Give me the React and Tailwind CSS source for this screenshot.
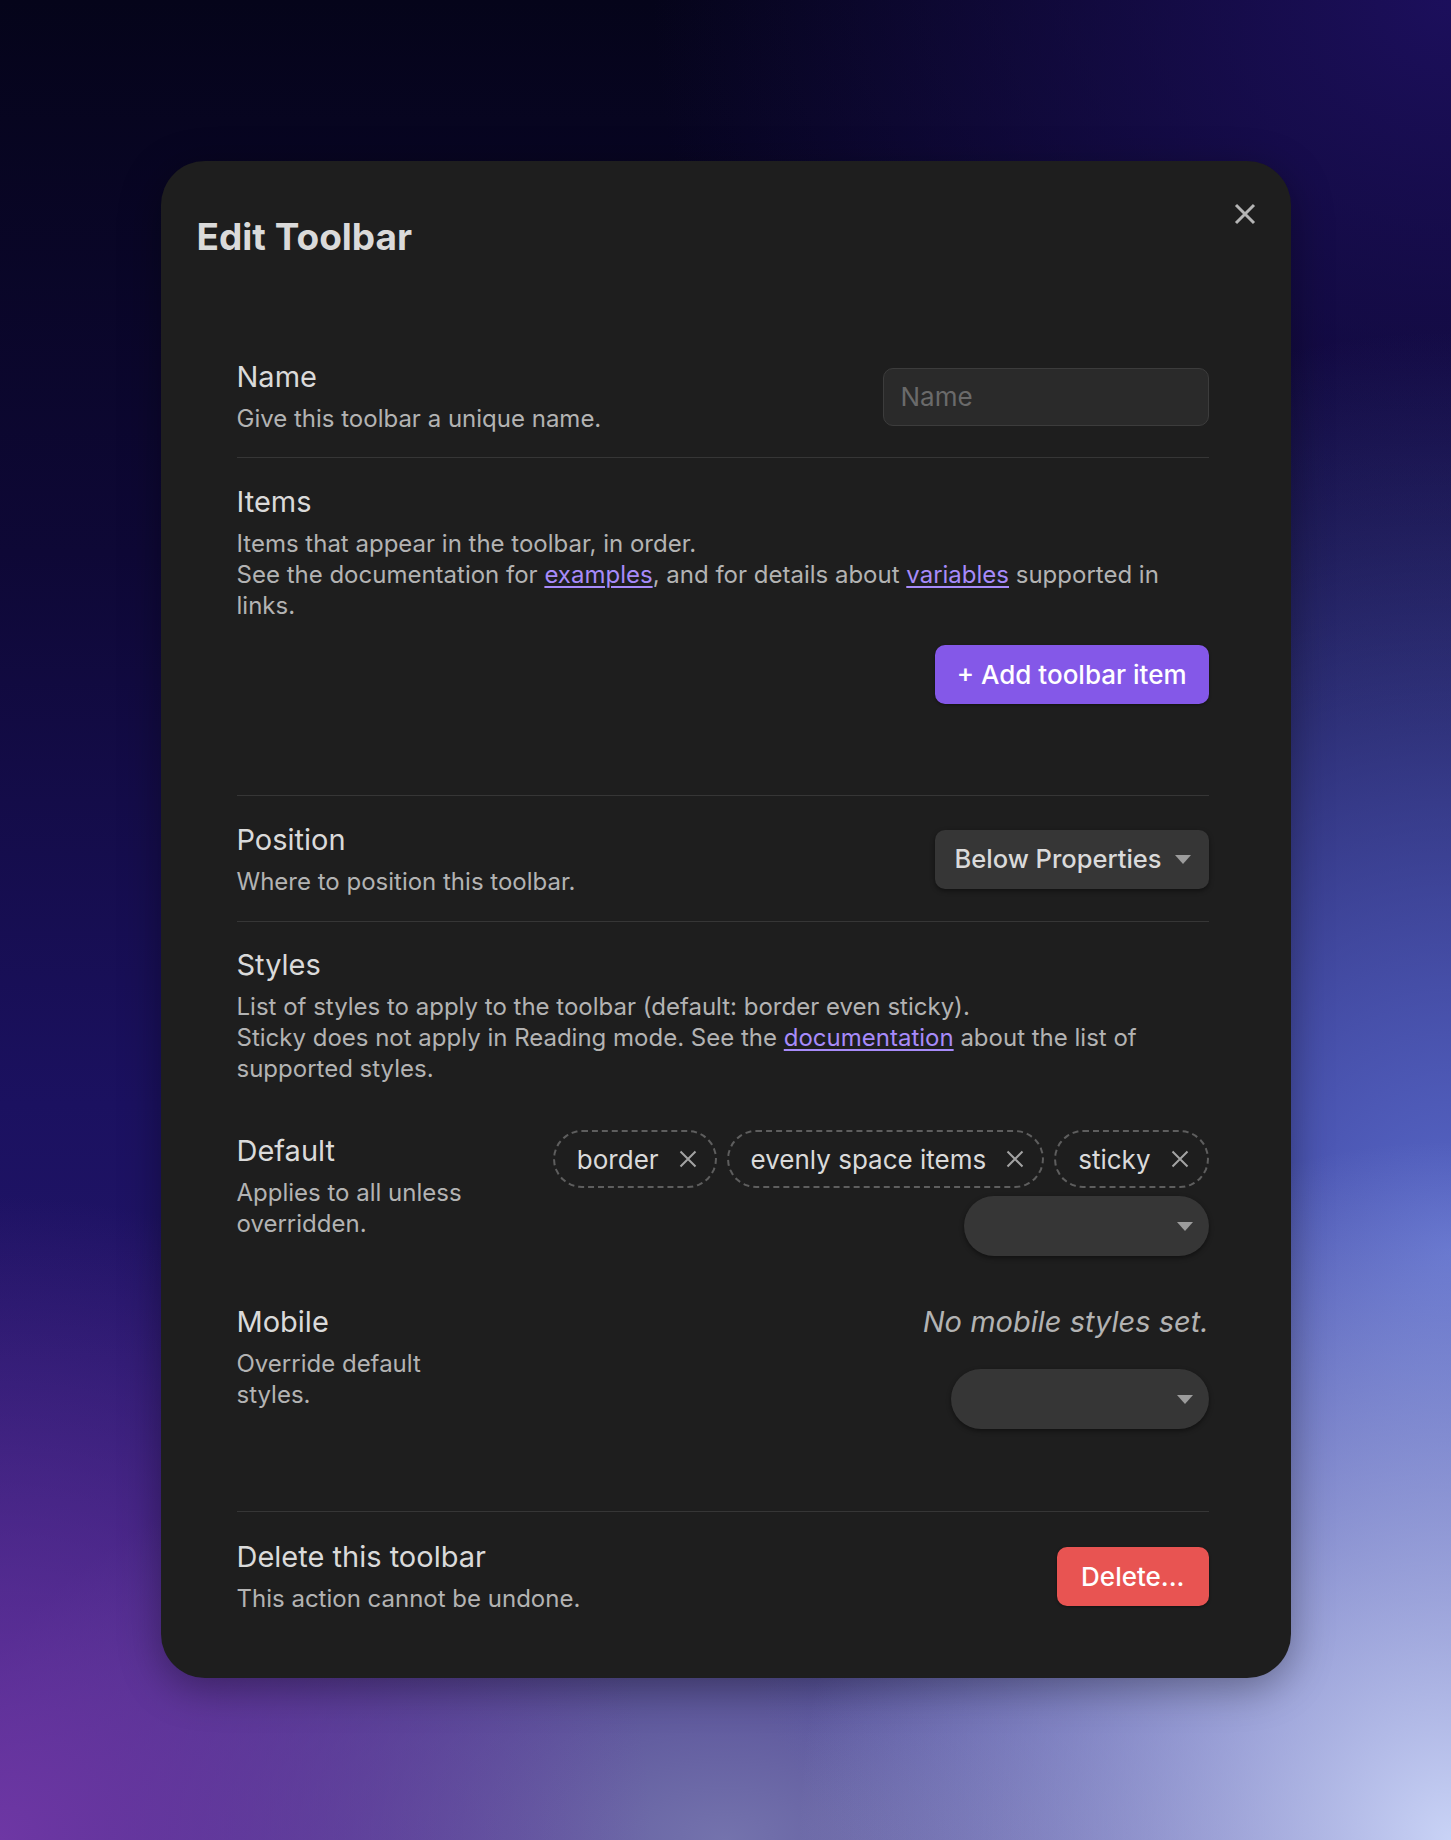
import React from "react";

function CloseIcon({ className }) {
  return (
    <svg viewBox="0 0 22 22" className={className} fill="none" stroke="currentColor" strokeWidth="3" strokeLinecap="butt">
      <path d="M2 2L20 20M20 2L2 20" />
    </svg>
  );
}

function ChipX() {
  return (
    <svg viewBox="0 0 18 18" className="w-[18px] h-[18px] text-[#a3a3a3]" fill="none" stroke="currentColor" strokeWidth="2">
      <path d="M1.5 1.5L16.5 16.5M16.5 1.5L1.5 16.5" />
    </svg>
  );
}

function Caret() {
  return (
    <svg viewBox="0 0 16 9" className="w-[16px] h-[9px] text-[#9c9c9c]" fill="currentColor">
      <path d="M0 0H16L8 9Z" />
    </svg>
  );
}

function Info({ name, children, className = "", descClass = "" }) {
  return (
    <div className={className}>
      <div className="text-[29px] leading-[36px] text-[#dadada]">{name}</div>
      <div className={`mt-[8px] text-[24px] leading-[31px] text-[#b3b3b3] ${descClass}`}>{children}</div>
    </div>
  );
}

function Link({ children }) {
  return <span className="text-[#a78bfa] underline underline-offset-[3px] decoration-[1.5px]">{children}</span>;
}

function Chip({ label }) {
  return (
    <div className="flex items-center h-[58px] pl-[22px] pr-[18px] gap-[20px] rounded-full border-2 border-dashed border-[#5e5e5e] text-[26px] text-[#dadada]">
      <span>{label}</span>
      <ChipX />
    </div>
  );
}

function PillSelect({ width }) {
  return (
    <div className={`${width} h-[60px] rounded-full bg-[#363636] shadow-[0_2px_5px_rgba(0,0,0,0.45)] flex items-center justify-end pr-[16px]`}>
      <Caret />
    </div>
  );
}

export default function App() {
  return (
    <div
      className="h-[1840px] w-full pt-[161px] bg-[radial-gradient(45%_38%_at_100%_100%,#c9d3f6_0%,rgba(170,185,235,0)_100%),radial-gradient(55%_50%_at_100%_68%,#5868c8_0%,rgba(80,95,190,0)_100%),radial-gradient(45%_35%_at_0%_100%,#6e37a4_0%,rgba(100,50,160,0)_100%),radial-gradient(55%_25%_at_50%_100%,#7473ad_0%,rgba(110,110,170,0)_100%),radial-gradient(55%_40%_at_100%_0%,#1c0f5c_0%,rgba(28,15,92,0)_100%),linear-gradient(180deg,#05041a_0%,#0e0836_30%,#1b1160_60%,#2f1c7a_100%)]"
      style={{ fontFamily: "Inter, 'Noto Sans', sans-serif" }}
    >
      <div className="relative mx-auto w-[1130px] rounded-[44px] bg-[#1e1e1e] pt-[54px] pb-[64px] px-[36px] shadow-[0_10px_40px_rgba(0,0,0,0.35)]">
        <button className="absolute top-[42px] right-[35px] text-[#b5b5b5]">
          <CloseIcon className="w-[22px] h-[22px]" />
        </button>
        <h1 className="text-[37px] leading-[44px] font-bold text-[#dadada] mb-[76px]">Edit Toolbar</h1>

        <div className="ml-[40px] mr-[46px]">
          {/* Name */}
          <div className="flex items-center justify-between pt-[24px] pb-[23px] border-b border-[#363636]">
            <Info name="Name">Give this toolbar a unique name.</Info>
            <div className="w-[326px] h-[58px] rounded-[10px] bg-[#2a2a2a] border-[1.5px] border-[#3c3c3c] flex items-center pl-[17px] text-[26px] text-[#6a6a6a]">
              Name
            </div>
          </div>

          {/* Items */}
          <div className="pt-[26px] pb-[91px] border-b border-[#363636]">
            <Info name="Items" descClass="max-w-[945px]">
              Items that appear in the toolbar, in order.
              <br />
              See the documentation for <Link>examples</Link>, and for details about <Link>variables</Link> supported in links.
            </Info>
            <div className="flex justify-end mt-[24px]">
              <button className="h-[59px] px-[22px] rounded-[10px] bg-[#8458e8] text-white text-[26px] font-medium shadow-[0_1px_3px_rgba(0,0,0,0.4)]">
                + Add toolbar item
              </button>
            </div>
          </div>

          {/* Position */}
          <div className="flex items-center justify-between pt-[26px] pb-[24px] border-b border-[#363636]">
            <Info name="Position">Where to position this toolbar.</Info>
            <div className="w-[274px] h-[59px] rounded-[10px] bg-[#363636] shadow-[0_2px_5px_rgba(0,0,0,0.45)] flex items-center justify-between pl-[20px] pr-[18px] text-[25.5px] font-medium text-[#dadada]">
              <span>Below Properties</span>
              <Caret />
            </div>
          </div>

          {/* Styles */}
          <div className="pt-[25px] pb-[82px] border-b border-[#363636]">
            <Info name="Styles">
              List of styles to apply to the toolbar (default: border even sticky).
              <br />
              Sticky does not apply in Reading mode. See the <Link>documentation</Link> about the list of supported styles.
            </Info>

            <div className="flex items-start justify-between mt-[46px]">
              <Info name="Default" className="w-[245px] pt-[3px]">
                Applies to all unless overridden.
              </Info>
              <div className="flex flex-col items-end">
                <div className="flex gap-[10px]">
                  <Chip label="border" />
                  <Chip label="evenly space items" />
                  <Chip label="sticky" />
                </div>
                <div className="mt-[8px]">
                  <PillSelect width="w-[245px]" />
                </div>
              </div>
            </div>

            <div className="flex items-start justify-between mt-[48px]">
              <Info name="Mobile" className="w-[245px]">
                Override default styles.
              </Info>
              <div className="flex flex-col items-end">
                <div className="text-[29px] leading-[36px] italic text-[#b3b3b3]">No mobile styles set.</div>
                <div className="mt-[29px]">
                  <PillSelect width="w-[258px]" />
                </div>
              </div>
            </div>
          </div>

          {/* Delete */}
          <div className="flex items-center justify-between pt-[27px]">
            <Info name="Delete this toolbar">This action cannot be undone.</Info>
            <button className="h-[59px] px-[24px] rounded-[10px] bg-[#e85452] text-white text-[26px] font-medium shadow-[0_1px_3px_rgba(0,0,0,0.4)]">
              Delete...
            </button>
          </div>
        </div>
      </div>
    </div>
  );
}
